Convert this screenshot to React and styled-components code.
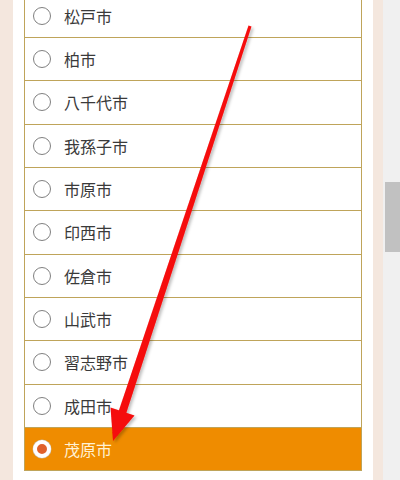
import React from 'react'
import styled, {createGlobalStyle} from 'styled-components'

const GlobalStyle = createGlobalStyle`
  html, body {
    margin: 0;
    padding: 0;
    height: 480px;
    overflow: hidden;
  }
  body {
    font-family: "Noto Sans CJK JP", "Noto Sans", sans-serif;
  }
`

const cities = [
  '松戸市',
  '柏市',
  '八千代市',
  '我孫子市',
  '市原市',
  '印西市',
  '佐倉市',
  '山武市',
  '習志野市',
  '成田市',
  '茂原市'
]

const Screen = styled.div`
  position: relative;
  display: flex;
  width: 400px;
  height: 480px;
  overflow: hidden;
`

const Page = styled.div`
  flex: 1;
  background: #f4e7de;
  padding: 0 10px 0 13px;
`

const Panel = styled.div`
  background: #fff;
  height: 100%;
  padding: 0 11px;
  overflow: hidden;
`

const List = styled.ul`
  list-style: none;
  margin: -5.33px 0 0;
  padding: 0;
  border-left: 1px solid #bfa45a;
  border-right: 1px solid #bfa45a;
`

const Row = styled.li`
  box-sizing: border-box;
  height: 43.33px;
  display: flex;
  align-items: center;
  padding-left: 8px;
  gap: 13px;
  border-bottom: 1px solid #bfa45a;
  background: ${p => (p.selected ? '#ef8c00' : '#fff')};
  color: ${p => (p.selected ? '#fff1d4' : '#3a3a3a')};
  font-size: 16px;
`

const Radio = styled.span`
  box-sizing: border-box;
  width: 18px;
  height: 18px;
  border-radius: 50%;
  flex-shrink: 0;
  background: ${p => (p.checked ? '#e0612c' : '#fff')};
  border: ${p => (p.checked ? '4px solid #fff' : '1.5px solid #808080')};
  box-shadow: ${p => (p.checked ? '0 0 0 0.5px #c9b8a0' : 'none')};
`

const ScrollTrack = styled.div`
  width: 17px;
  background: #f0f0f0;
  padding-top: 182px;
  box-sizing: border-box;
`

const Thumb = styled.div`
  margin-left: 2px;
  width: 15px;
  height: 70px;
  background: #c1c1c1;
`

const Overlay = styled.svg`
  position: absolute;
  left: 0;
  top: 0;
  pointer-events: none;
`

const Arrow = () => (
  <Overlay width='400' height='480' viewBox='0 0 400 480'>
    <defs>
      <filter id='sh' x='-20%' y='-20%' width='140%' height='140%'>
        <feDropShadow dx='2' dy='2' stdDeviation='1.5' floodColor='#000' floodOpacity='0.25' />
      </filter>
    </defs>
    <g filter='url(#sh)' fill='#f50a0a'>
      <polygon points='248.5,25.5 251.5,26.5 126,414 118.5,411.5' />
      <polygon points='113,441 110.5,407.5 134.5,415.5' />
    </g>
  </Overlay>
)

export default function App () {
  return (
    <>
      <GlobalStyle />
      <Screen>
        <Page>
          <Panel>
            <List>
              {cities.map((c, i) => {
                const selected = i === cities.length - 1
                return (
                  <Row key={c} selected={selected}>
                    <Radio checked={selected} />
                    {c}
                  </Row>
                )
              })}
            </List>
          </Panel>
        </Page>
        <ScrollTrack>
          <Thumb />
        </ScrollTrack>
        <Arrow />
      </Screen>
    </>
  )
}
